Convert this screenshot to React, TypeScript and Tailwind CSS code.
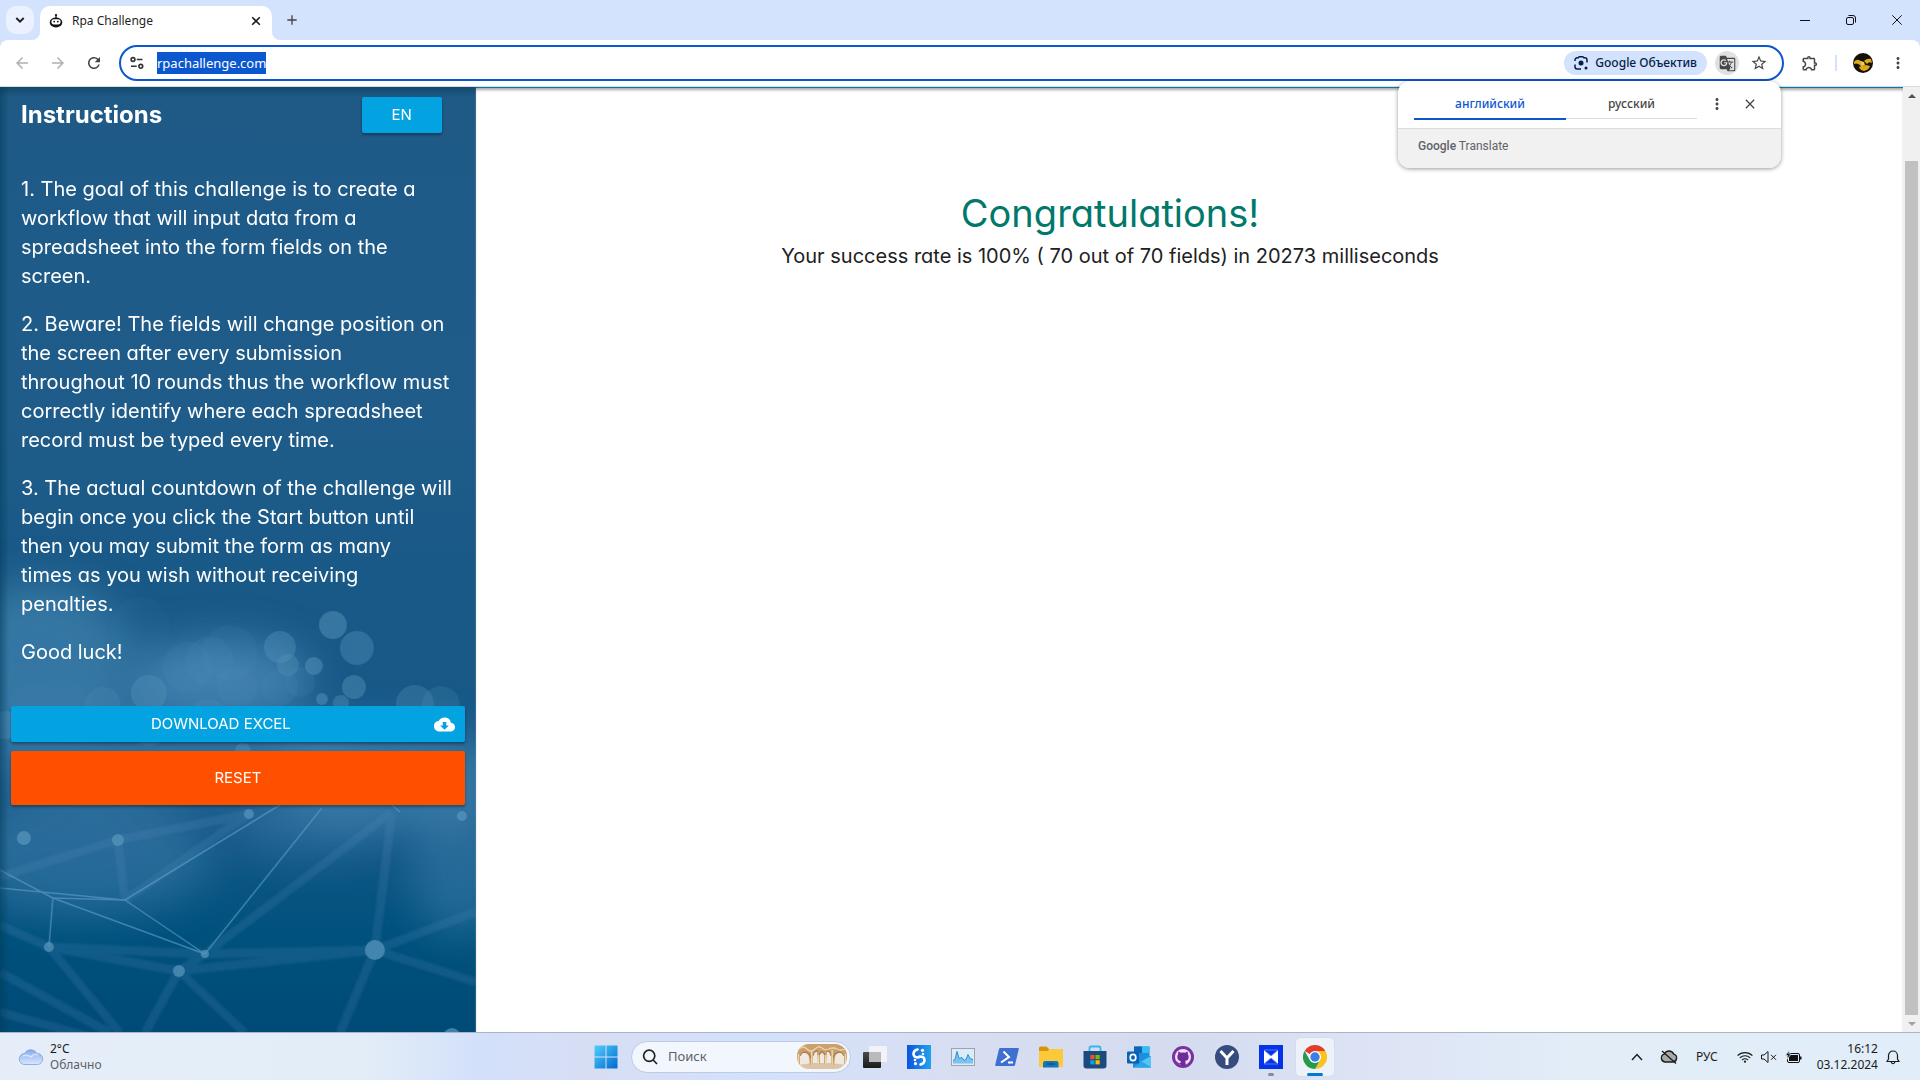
import React from "react";
import {
  MdAdd,
  MdArrowBack,
  MdArrowForward,
  MdClose,
  MdCloudDownload,
  MdGTranslate,
  MdMoreVert,
  MdOutlineExtension,
  MdRefresh,
  MdStarBorder,
} from "react-icons/md";

const uiFont = 'font-["Noto_Sans","Open_Sans",sans-serif]';
const pageFont = 'font-["Inter",sans-serif] [font-feature-settings:"cv11"]';

function RobotIcon() {
  return (
    <svg viewBox="0 0 14 14" className="size-[14px]" aria-hidden="true">
      <circle cx="7" cy="1.2" r="1.1" fill="#111" />
      <path d="M7 2v2" stroke="#111" strokeWidth="1.2" />
      <path d="M.7 8.5A6.3 5 0 0 1 13.3 8.5 6.3 5 0 0 1 .7 8.500z" fill="#111" />
      <rect x="2.400" y="5.200" width="9.200" height="5.200" rx="2.600" fill="#fff" />
      <circle cx="5.200" cy="7.600" r=".9" fill="#111" />
      <circle cx="8.800" cy="7.600" r=".9" fill="#111" />
    </svg>
  );
}

function TabStrip() {
  return (
    <header className="flex h-10 items-end bg-[#d3e2fd]">
      <button aria-label="Search tabs" className="mb-[6px] ml-[6px] grid size-7 place-items-center rounded-[10px] bg-[#ebf1fe]">
        <svg viewBox="0 0 10 10" className="size-[10px]" fill="none" stroke="#1f1f1f" strokeWidth="1.900"><path d="M1.300 3l3.700 3.700L8.700 3" /></svg>
      </button>
      <svg viewBox="0 0 8 8" className="-ml-0.5 size-2" aria-hidden="true">
        <path d="M8 0v8H0a8 8 0 0 0 8-8z" fill="#fff" />
      </svg>
      <div className="flex h-[34px] w-[232px] items-center rounded-t-[10px] bg-white pr-[11px] pl-[9px] pb-1">
        <RobotIcon />
        <span className="ml-[9px] flex-1 text-[12px] text-[#1f1f1f]">Rpa Challenge</span>
        <button aria-label="Close tab">
          <svg viewBox="0 0 10 10" className="size-[10px]" fill="none" stroke="#1f1f1f" strokeWidth="1.600"><path d="M1.200 1.200l7.600 7.600M8.800 1.200L1.200 8.800" /></svg>
        </button>
      </div>
      <svg viewBox="0 0 8 8" className="size-2" aria-hidden="true">
        <path d="M0 0v8h8a8 8 0 0 1-8-8z" fill="#fff" />
      </svg>
      <button aria-label="New tab" className="mb-[12px] ml-1 text-[#444]">
        <MdAdd className="size-4" />
      </button>
      <div className="ml-auto flex h-10 items-center gap-9 pr-[18px]">
        <button aria-label="Minimize">
          <svg viewBox="0 0 10 10" className="size-[10px]" stroke="#111" fill="none"><path d="M0 5.500h10" /></svg>
        </button>
        <button aria-label="Restore">
          <svg viewBox="0 0 10 10" className="size-[10px]" stroke="#111" fill="none">
            <rect x=".5" y="2.500" width="7" height="7" rx="1.500" />
            <path d="M2.500 .5H7a2.500 2.500 0 0 1 2.500 2.500v4.500" />
          </svg>
        </button>
        <button aria-label="Close">
          <svg viewBox="0 0 10 10" className="size-[10px]" stroke="#111" fill="none"><path d="M.3.3l9.400 9.400M9.700.3L.3 9.700" /></svg>
        </button>
      </div>
    </header>
  );
}

function Toolbar() {
  return (
    <nav className="bg-[#d3e2fd]">
      <div className="flex h-[47px] items-center rounded-t-lg border-b border-[#dcdcdc] bg-white pr-[13px] pl-[13px]">
        <div className="flex gap-[18px]">
          <button aria-label="Back" className="text-[#b0b0b0]"><MdArrowBack className="size-[18px]" /></button>
          <button aria-label="Forward" className="text-[#b0b0b0]"><MdArrowForward className="size-[18px]" /></button>
          <button aria-label="Reload" className="text-[#444]"><MdRefresh className="size-[18px]" /></button>
        </div>
        <div className="ml-4 flex h-9 flex-1 items-center rounded-full border-2 border-[#0b57d0] bg-white pr-[14px] pl-[9px]">
          <button aria-label="Site information">
            <svg viewBox="0 0 14 14" className="size-[14px]" fill="none" stroke="#333" strokeWidth="1.600">
              <circle cx="3" cy="3.500" r="1.900" />
              <path d="M6.800 3.500H12.500M1 10.300h5.700" />
              <circle cx="10.800" cy="10.300" r="1.900" />
            </svg>
          </button>
          <input
            aria-label="Address"
            defaultValue="rpachallenge.com"
            className="ml-[13px] h-[22px] [field-sizing:content] bg-[#0b57d0] text-[13px] text-white outline-none"
          />
          <button className="ml-auto flex h-6 items-center gap-[7px] rounded-full bg-[#d3e2fd] px-[10px] text-[12px] font-medium text-[#041e49]">
            <svg viewBox="0 0 14 14" className="size-[14px]" fill="none" stroke="#041e49" strokeWidth="1.500">
              <path d="M1 5V4a2.200 2.200 0 0 1 2.200-2.200h1L5.200.8h3.600l1 1h1A2.200 2.200 0 0 1 13 4v2.500M1 8.500v2.300A2.200 2.200 0 0 0 3.200 13H7" />
              <circle cx="7" cy="7" r="2.500" fill="#041e49" stroke="none" />
              <circle cx="12" cy="12" r="1.500" fill="#041e49" stroke="none" />
            </svg>
            Google Объектив
          </button>
          <button aria-label="Translate this page" className="ml-2 grid size-6 place-items-center rounded-full bg-[#e1e1e1] text-[#474747]">
            <MdGTranslate className="size-[17px]" />
          </button>
          <button aria-label="Bookmark" className="ml-[11px] text-[#474747]"><MdStarBorder className="size-[18px]" /></button>
        </div>
        <button aria-label="Extensions" className="ml-[17px] text-[#474747]"><MdOutlineExtension className="size-[18px]" /></button>
        <span className="ml-4 h-4 w-0.5 bg-[#d3e2fd]" />
        <button aria-label="Profile" className="ml-4">
          <svg viewBox="0 0 20 20" className="size-5">
            <circle cx="10" cy="10" r="10" fill="#14110c" />
            <path d="M1 9q2-3 5-2l5 3-2 4Q5 9 1 11zM11 8q3-3 7-2l1 4q-3-2-5 1zM8 13l5-1 4 1q-1 4-6 5-4-1-5-4z" fill="#dfa81a" />
            <path d="M7 8l4 1 1 3-3 1z" fill="#f4cf45" />
          </svg>
        </button>
        <button aria-label="Menu" className="ml-4 text-[#474747]"><MdMoreVert className="size-[18px]" /></button>
      </div>
    </nav>
  );
}

function TranslateBubble() {
  return (
    <div className="absolute top-[81px] right-[139px] z-10 w-[383px] overflow-hidden rounded-xl bg-white shadow-[0_1px_4px_rgba(0,0,0,0.4)]">
      <div className="flex h-12 items-start border-b border-[#dadce0] pl-4 text-[12px] font-medium">
        <div role="tablist" className="flex pt-1">
          <button role="tab" aria-selected="true" className="h-[35px] w-[152px] border-b-2 border-[#0b57d0] pt-1 text-[#0b57d0]">английский</button>
          <button role="tab" aria-selected="false" className="h-[34px] w-[131px] border-b border-[#dadce0] pt-1 text-[#474747]">русский</button>
        </div>
        <button aria-label="Options" className="mt-[14px] ml-[11px] text-[#474747]"><MdMoreVert className="size-[18px]" /></button>
        <button aria-label="Close" className="mt-[15px] ml-4 text-[#474747]"><MdClose className="size-4" /></button>
      </div>
      <div className="h-[39px] bg-[#f1f1f1] pt-2 pl-5 font-[Roboto,sans-serif] text-[12px] text-[#5f6368]">
        <span className="font-medium">Google</span> Translate
      </div>
    </div>
  );
}

const fine: number[][] = [
  [0, 783, 53, 811], [0, 801, 125, 813], [53, 811, 125, 813], [53, 811, 49, 860],
  [53, 811, 205, 867], [125, 813, 205, 867], [125, 813, 280, 718], [205, 867, 322, 721], [333, 665, 400, 725],
];
const thick: number[][] = [
  [49, 860, 205, 867], [49, 860, 179, 884], [205, 867, 375, 863], [179, 884, 375, 863],
  [179, 884, 145, 946], [179, 884, 245, 946], [375, 863, 340, 946], [375, 863, 392, 725],
  [205, 867, 392, 725], [179, 884, 205, 867], [118, 753, 125, 813], [49, 860, 120, 946],
  [0, 885, 110, 946], [0, 838, 49, 860], [249, 727, 125, 813], [375, 863, 476, 895],
  [375, 863, 476, 825], [0, 790, 118, 753], [118, 753, 249, 727], [0, 925, 90, 950],
];
const dots: number[][] = [
  [24, 751, 7], [118, 753, 6], [249, 727, 5], [49, 860, 5], [205, 867, 4], [179, 884, 6],
  [375, 863, 10], [462, 729, 5], [452, 950, 9],
];
const bokeh: number[][] = [
  [333, 538, 14, 0.5], [357, 561, 17, 0.4], [280, 560, 16, 0.4], [288, 578, 11, 0.35],
  [314, 579, 9, 0.5], [354, 600, 12, 0.45], [322, 612, 6, 0.5], [341, 616, 8, 0.4],
  [149, 606, 18, 0.35], [103, 618, 18, 0.2], [415, 617, 19, 0.3], [441, 618, 19, 0.2],
  [6, 638, 14, 0.4], [188, 580, 25, 0.12], [210, 574, 24, 0.12], [230, 566, 28, 0.08],
  [237, 600, 20, 0.12], [208, 632, 20, 0.2], [140, 540, 30, 0.05], [300, 595, 15, 0.12],
  [243, 664, 8, 0.4], [149, 640, 19, 0.25], [280, 600, 18, 0.12],
];

function NetworkBackdrop() {
  return (
    <svg viewBox="0 0 476 945" preserveAspectRatio="xMidYMid slice" className="absolute inset-0 size-full" aria-hidden="true">
      <defs>
        <linearGradient id="deep" x1="0" y1="0" x2="0" y2="1">
          <stop offset="0" stopColor="#1f5a87" />
          <stop offset=".35" stopColor="#1f5c89" />
          <stop offset=".52" stopColor="#195987" />
          <stop offset=".78" stopColor="#165888" />
          <stop offset=".9" stopColor="#00517d" />
          <stop offset="1" stopColor="#004a76" />
        </linearGradient>
        <linearGradient id="edge">
          <stop offset="0" stopColor="#003a55" stopOpacity=".5" />
          <stop offset="1" stopColor="#003a55" stopOpacity="0" />
        </linearGradient>
        <linearGradient id="lip" x1="0" y1="0" x2="0" y2="1">
          <stop offset="0" stopColor="#053a52" stopOpacity=".5" />
          <stop offset="1" stopColor="#053a52" stopOpacity="0" />
        </linearGradient>
        <filter id="haze" x="-50%" y="-50%" width="200%" height="200%"><feGaussianBlur stdDeviation="20" /></filter>
        <filter id="soft" x="-20%" y="-20%" width="140%" height="140%"><feGaussianBlur stdDeviation="1" /></filter>
      </defs>
      <rect width="476" height="945" fill="url(#deep)" />
      <g filter="url(#haze)" fill="#4a8ab6">
        <ellipse cx="40" cy="570" rx="90" ry="75" opacity=".6" />
        <ellipse cx="220" cy="588" rx="90" ry="35" opacity=".8" />
        <ellipse cx="140" cy="660" rx="220" ry="50" opacity=".45" />
        <ellipse cx="390" cy="690" rx="120" ry="50" opacity=".6" />
        <ellipse cx="80" cy="770" rx="130" ry="60" opacity=".4" />
        <ellipse cx="310" cy="740" rx="80" ry="30" opacity=".35" />
        <ellipse cx="460" cy="780" rx="50" ry="70" opacity=".4" />
      </g>
      <g filter="url(#soft)">
        <g stroke="#5b8fbf" strokeWidth="9" opacity=".18">
          {thick.map(([a, b, c, d], i) => <line key={i} x1={a} y1={b} x2={c} y2={d} />)}
        </g>
      </g>
      <g stroke="#5e9cc7" strokeWidth="1.500" opacity=".65">
        {fine.map(([a, b, c, d], i) => <line key={i} x1={a} y1={b} x2={c} y2={d} />)}
      </g>
      <g fill="#5594bb">
        {dots.map(([x, y, r], i) => <circle key={i} cx={x} cy={y} r={r} opacity=".75" />)}
        {bokeh.map(([x, y, r, o], i) => <circle key={i} cx={x} cy={y} r={r} opacity={o} />)}
      </g>
      <rect width="9" height="945" fill="url(#edge)" />
      <rect width="476" height="10" fill="url(#lip)" />
    </svg>
  );
}

function Instructions() {
  return (
    <aside className="relative w-1/4 shrink-0 overflow-hidden text-white">
      <NetworkBackdrop />
      <div className="relative">
        <div className="flex items-center justify-between pt-[10px] pr-[34px] pl-[21px]">
          <h1 className="text-[24px] leading-9 font-bold">Instructions</h1>
          <button className="h-9 w-20 rounded-xs bg-[#03a3e1] text-[15px] shadow-[0_2px_3px_rgba(0,0,0,0.35)]">EN</button>
        </div>
        <div className="mt-[42px] flex flex-col gap-[19px] pl-[21px] text-[20px] leading-[29px] whitespace-nowrap">
          <p>
            1. The goal of this challenge is to create a<br />workflow that will input data from a<br />
            spreadsheet into the form fields on the<br />screen.
          </p>
          <p>
            2. Beware! The fields will change position on<br />the screen after every submission<br />
            throughout 10 rounds thus the workflow must<br />correctly identify where each spreadsheet<br />
            record must be typed every time.
          </p>
          <p>
            3. The actual countdown of the challenge will<br />begin once you click the Start button until<br />
            then you may submit the form as many<br />times as you wish without receiving<br />penalties.
          </p>
          <p>Good luck!</p>
        </div>
        <div className="mt-[39px] flex flex-col gap-[9px] px-[11px]">
          <a href="#download" className="flex h-9 items-center rounded-xs bg-[#03a3e1] pr-[10px] text-[15px] shadow-[0_2px_3px_rgba(0,0,0,0.35)]">
            <span className="flex-1 pr-[3px] text-center">DOWNLOAD EXCEL</span>
            <MdCloudDownload className="size-[21px]" />
          </a>
          <button className="h-[54px] rounded-xs bg-[#ff5000] text-[15px] shadow-[0_2px_3px_rgba(0,0,0,0.35)]">RESET</button>
        </div>
      </div>
    </aside>
  );
}

function Scrollbar() {
  return (
    <div className="flex w-[17px] shrink-0 flex-col items-center bg-[#f0f0f0]">
      <span className="grid h-[74px] pt-[7px]"><svg viewBox="0 0 8 4" className="h-1 w-2"><path d="M0 4l4-4 4 4z" fill="#505050" /></svg></span>
      <span className="w-[13px] flex-1 bg-[#c1c1c1]" />
      <span className="grid h-[17px] place-items-center"><svg viewBox="0 0 8 4" className="h-1 w-2"><path d="M0 0l4 4 4-4z" fill="#a0a0a0" /></svg></span>
    </div>
  );
}

function Tile({ children, active = false, running = false, label }: { children: React.ReactNode; active?: boolean; running?: boolean; label: string }) {
  return (
    <button aria-label={label} className="relative grid h-12 w-11 place-items-center">
      {active && <span className="absolute inset-x-[3px] top-[5px] bottom-[5px] rounded bg-[#edf1fa] shadow-[0_0_1px_rgba(0,0,0,0.2)]" />}
      <span className="relative">{children}</span>
      {active && <span className="absolute bottom-[5px] h-[3px] w-4 rounded-full bg-[#0078d4]" />}
      {running && <span className="absolute bottom-[5px] h-[3px] w-[6px] rounded-full bg-[#868b96]" />}
    </button>
  );
}

function Taskbar() {
  const s = "size-6";
  return (
    <footer className="flex h-12 shrink-0 items-center border-t border-[#aab6c8] bg-[linear-gradient(90deg,#e5eef8_0%,#e3edf8_19%,#d3e0fa_25%,#d7def4_31%,#d3e1fb_39%,#d8def2_50%,#d6dcf0_62%,#dde4f5_72%,#e2edf8_82%,#e1edf8_100%)]">
      <div className="flex flex-1 items-center gap-[6px] pl-[18px]">
        <svg viewBox="0 0 26 18" className="h-[18px] w-[26px]" aria-hidden="true">
          <defs><linearGradient id="cl" x1="0" y1="0" x2="0" y2="1"><stop offset="0" stopColor="#86a9ee" /><stop offset="1" stopColor="#dbe8fb" /></linearGradient></defs>
          <path d="M7 16.500a5.500 5.500 0 0 1-.5-11A7 7 0 0 1 19 5.500a5.500 5.500 0 0 1 .5 11z" fill="url(#cl)" stroke="#7d9fe6" strokeWidth=".8" />
          <path d="M5 8q4-2 8 1M13 9q3-4 7-2" fill="none" stroke="#eaf2fe" strokeWidth="1.500" opacity=".7" />
        </svg>
        <div className="text-[12px] leading-4"><p className="text-[#1b1b1b]">2°C</p><p className="text-[#5d6168]">Облачно</p></div>
      </div>
      <div className="flex items-center pl-[3px]">
        <Tile label="Start">
          <svg viewBox="0 0 24 24" className={s}>
            <defs><linearGradient id="win" x1="0" y1="0" x2="1" y2="1"><stop offset="0" stopColor="#4fd0fb" /><stop offset="1" stopColor="#0068cf" /></linearGradient></defs>
            <path d="M.5 .5h11v11H.5zM12.500 .5h11v11h-11zM.5 12.500h11v11H.5zM12.500 12.500h11v11h-11z" fill="url(#win)" />
          </svg>
        </Tile>
        <label className="mr-[2px] ml-[3px] flex h-8 w-[220px] items-center rounded-full border border-[#bccae4] bg-[#f2f6fd] pr-[3px] pl-[10px]">
          <svg viewBox="0 0 16 16" className="size-4 shrink-0" fill="none" stroke="#222" strokeWidth="1.700"><circle cx="7.200" cy="6.800" r="5.600" /><path d="M11.200 11l3.800 4" /></svg>
          <input aria-label="Поиск" placeholder="Поиск" className="ml-[10px] w-full min-w-0 bg-transparent text-[13px] placeholder:text-[#5c6068] focus:outline-none" />
          <svg viewBox="0 0 50 26" className="h-[26px] w-[50px] shrink-0" aria-hidden="true">
            <defs><clipPath id="pill"><rect width="50" height="25" rx="12" /></clipPath></defs>
            <g clipPath="url(#pill)">
              <rect width="50" height="26" fill="#efe9e2" />
              <path d="M0 26v-5l16-2h18l16 2v5z" fill="#dcc4a6" />
              <path d="M0 0h50v22h-3V12q-2-4-5-3-4 1-4 5l-1 7h-3V12q-2-5-4-4l-1 12h-2v-9q-2-4-4 0v9h-2l-1-12q-3 0-4 4v9h-3l-1-7q0-4-4-5-3-1-5 3v10H0z" fill="#c9a06e" />
              <g fill="none" stroke="#9a6f40" strokeWidth=".9">
                <path d="M3 12q2-5 6-4 4 1 5 6M16 12q1-6 5-5M22 11q3-7 6 0M29 7q4-1 5 5M36 14q1-5 5-6 4-1 6 4" />
              </g>
              <g stroke="#efd7ad" strokeWidth="1.400"><path d="M1.500 22V10M14.800 21V6M35.200 21V6M48.500 22V10M21.500 20v-9M28.500 20v-9" /></g>
              <path d="M2 5q4-4 8 0t8 0 7-1 7 1 8 0 8 0" stroke="#edd3a8" strokeWidth="1.300" fill="none" />
            </g>
          </svg>
        </label>
        <Tile label="Task View">
          <svg viewBox="0 0 24 24" className={s}>
            <defs><linearGradient id="tv" x1="0" y1="0" x2="0" y2="1"><stop offset="0" stopColor="#4a4a4a" /><stop offset="1" stopColor="#1a1a1a" /></linearGradient></defs>
            <rect x="0" y="7" width="18" height="16" rx="1" fill="url(#tv)" />
            <rect x="6" y="1" width="18" height="16" rx="1" fill="#f2f3f6" />
            <rect x="6" y="7" width="12" height="10" fill="#b9babd" />
          </svg>
        </Tile>
        <Tile label="Studio">
          <svg viewBox="0 0 24 24" className={s}>
            <defs><linearGradient id="st"><stop offset="0" stopColor="#0a55dc" /><stop offset="1" stopColor="#23a2ee" /></linearGradient></defs>
            <path d="M0 0h24v24H0z" fill="url(#st)" />
            <path d="M10.500 4.500q-4 1-4 4.500 0 3.500 5 3.500M13.500 19.500q4-1 4-4.500 0-3.500-5-3.500" fill="none" stroke="#fff" strokeWidth="2.600" strokeLinecap="round" />
            <circle cx="15.500" cy="5.300" r="1.600" fill="#fff" /><circle cx="16" cy="9" r="1.300" fill="#fff" /><circle cx="8.500" cy="18.700" r="1.600" fill="#fff" /><circle cx="8" cy="15" r="1.300" fill="#fff" />
          </svg>
        </Tile>
        <Tile label="Performance Monitor">
          <svg viewBox="0 0 24 24" className={s}>
            <rect x=".5" y="3.500" width="23" height="17" fill="#dcebf5" stroke="#9aa5b0" />
            <path d="M2 18.500v-3l2-1 2-8 2 7 3-1 2 3 2-1 2-5 2 4 3 1v4z" fill="#7cc3f2" />
            <path d="M2 15.500l2-1 2-8 2 7 3-1 2 3 2-1 2-5 2 4 3 1" fill="none" stroke="#2f8fd8" />
          </svg>
        </Tile>
        <Tile label="PowerShell">
          <svg viewBox="0 0 24 24" className={s}>
            <path d="M5.500 3h17.700q.8 0 .6 1L20 20q-.2 1-1.200 1H1Q0 21 .2 20L4 4q.3-1 1.500-1z" fill="#3f6fd0" />
            <path d="M8.500 6.500l5.500 5.500-8 5.500M13 17.500h5" fill="none" stroke="#fff" strokeWidth="2" />
          </svg>
        </Tile>
        <Tile label="File Explorer">
          <svg viewBox="0 0 24 24" className={s}>
            <path d="M0 3q0-1.500 1.500-1.500h6L10 4v3H0z" fill="#d9930d" />
            <path d="M0 6h8.500l2-2H23q1 0 1 1v17H0z" fill="#fcc93b" />
            <path d="M4 22.500V18q0-2 2-2h11.500q2 0 2 2v4.500z" fill="#1474bd" /><path d="M7.500 19h8.500" stroke="#0b4f8a" strokeWidth="1.200" />
          </svg>
        </Tile>
        <Tile label="Microsoft Store">
          <svg viewBox="0 0 24 24" className={s}>
            <path d="M6.500 6V3q0-1.500 1.500-1.500h8q1.500 0 1.500 1.500v3" fill="none" stroke="#36b6ee" strokeWidth="1.800" />
            <path d="M.5 6h23v14.500q0 3-3 3h-17q-3 0-3-3z" fill="#1c4a80" />
            <path d="M7.300 10h4.200v4.200H7.300z" fill="#f25022" /><path d="M12.500 10h4.200v4.200h-4.200z" fill="#7fba00" />
            <path d="M7.300 15.200h4.200v4.200H7.300z" fill="#00a4ef" /><path d="M12.500 15.200h4.200v4.200h-4.200z" fill="#ffb900" />
          </svg>
        </Tile>
        <Tile label="Outlook">
          <svg viewBox="0 0 24 24" className={s}>
            <path d="M7 1.500h15.500v13H7z" fill="#1b8fdc" /><path d="M15 1.500h7.500V8H15z" fill="#33bdf2" /><path d="M7 1.500h8V8H7z" fill="#0f66b8" />
            <path d="M6 11l18 0v11.500H6z" fill="#1c8fdf" /><path d="M24 11v11.500L13 17z" fill="#54c4f3" /><path d="M6 22.500l9-6 9 6z" fill="#2aa7e8" />
            <rect x="0" y="6.500" width="12" height="12" rx="1" fill="#0a62b5" />
            <ellipse cx="6" cy="12.500" rx="2.800" ry="3.200" fill="none" stroke="#fff" strokeWidth="1.700" />
          </svg>
        </Tile>
        <Tile label="GitHub">
          <svg viewBox="0 0 22 22" className="size-[22px]">
            <circle cx="11" cy="11" r="11" fill="#7c2fa0" /><circle cx="11" cy="11" r="8" fill="#efe2f5" />
            <path d="M6.500 5.500l2.500 1.300q2-.5 4 0l2.500-1.300q.6 1.500.2 2.600 1 1.200 1 2.900 0 3.400-3.700 4 .6.700.6 1.700v3.300H8.400v-2q-2.400.3-3.100-1.500-.4-.8-1-1.100.9-.2 1.600.8.9 1.300 2.500.8 0-1.300.6-1.800-3.700-.6-3.700-4.200 0-1.700 1-2.900-.4-1.100.2-2.600z" fill="#6f2b9a" />
          </svg>
        </Tile>
        <Tile label="Yandex">
          <svg viewBox="0 0 24 24" className={s}><circle cx="12" cy="12" r="12" fill="#364c7f" /><path d="M5.500 6l6.500 7 6.500-7M12 12.500V20" fill="none" stroke="#fff" strokeWidth="3" /></svg>
        </Tile>
        <Tile label="Robot" running>
          <svg viewBox="0 0 24 24" className={s}><path d="M0 0h24v24H0z" fill="#0433e8" /><path d="M5 5l7 4.500L19 5v14l-7-4.500L5 19z" fill="#fff" /><path d="M5 5h14l-7 6zM5 19h14l-7-6z" fill="#0433e8" stroke="#6f8cf5" strokeWidth=".8" /></svg>
        </Tile>
        <Tile label="Chrome" active>
          <svg viewBox="0 0 24 24" className={s}>
            <path d="M12 12L1.600 6A12 12 0 0 1 22.400 6z" fill="#e33b2e" /><path d="M12 6h10.400A12 12 0 0 1 12 24l5.200-9z" fill="#fcc31e" />
            <path d="M12 24A12 12 0 0 1 1.600 6l5.200 9L12 18l5.200-3z" fill="#269a48" />
            <circle cx="12" cy="12" r="6" fill="#fff" /><circle cx="12" cy="12" r="4.700" fill="#3b7de9" />
          </svg>
        </Tile>
      </div>
      <div className="flex flex-1 items-center justify-end pr-5 text-[12px] leading-4 text-[#1b1b1b]">
        <svg viewBox="0 0 12 8" className="h-2 w-3" fill="none" stroke="#1b1b1b" strokeWidth="1.400"><path d="M1 7l5-5.500L11 7" /></svg>
        <svg viewBox="0 0 18 14" className="ml-[17px] h-[14px] w-[18px]" stroke="#1b1b1b" strokeWidth="1.300">
          <path d="M5 12a4 4 0 0 1-.8-7.800 5.200 5.200 0 0 1 9.600 0A4 4 0 0 1 13 12z" fill="#a9a9a9" /><path d="M2 1l14 12.500" />
        </svg>
        <span className="ml-[18px]">РУС</span>
        <svg viewBox="0 0 16 12" className="ml-[19px] h-3 w-4" fill="none" stroke="#1b1b1b" strokeWidth="1.200">
          <path d="M.6 4.600a10.500 10.500 0 0 1 14.800 0M2.800 6.900a7.400 7.400 0 0 1 10.400 0M5 9.100a4.300 4.300 0 0 1 6 0" /><circle cx="8" cy="10.700" r="1.100" fill="#1b1b1b" stroke="none" />
        </svg>
        <svg viewBox="0 0 16 12" className="ml-2 h-3 w-4" fill="none" stroke="#1b1b1b"><path d="M.5 4v4H3l4 3.500V.5L3 4zM10 3.800l5 5M15 3.800l-5 5" /></svg>
        <svg viewBox="0 0 17 14" className="ml-2 h-[14px] w-[17px]">
          <rect x="2.500" y="3.500" width="12" height="9" rx="1.500" fill="none" stroke="#111" />
          <rect x="4" y="5" width="9" height="6" fill="#111" />
          <path d="M15 6.500h1.500v3H15z" fill="#111" />
          <path d="M4.500 0L.5 5.500h2.400L2 9.500 6 4H3.800z" fill="#111" stroke="#e2edf8" strokeWidth=".7" />
        </svg>
        <div className="ml-[15px] text-right"><p>16:12</p><p>03.12.2024</p></div>
        <svg viewBox="0 0 14 16" className="ml-2 h-4 w-[14px]" fill="none" stroke="#1b1b1b" strokeWidth="1.200"><path d="M1 12.500l1.500-2.500V6.500a4.500 4.500 0 0 1 9 0V10l1.500 2.500zM5 13q2 3.500 4 0" /></svg>
      </div>
    </footer>
  );
}

export default function App() {
  return (
    <div className={`relative flex min-h-screen flex-col bg-white ${uiFont}`}>
      <TabStrip />
      <Toolbar />
      <TranslateBubble />
      <div className="flex flex-1">
        <div className={`flex flex-1 ${pageFont}`}>
          <Instructions />
          <main className="flex-1 border-t border-[#0277b0] shadow-[inset_0_3px_3px_-1px_rgba(0,0,0,0.35)]">
            <div className="w-8/9 pt-[101px] text-center">
              <h2 className="text-[38px] leading-[48px] text-[#00796b]">Congratulations!</h2>
              <p className="mt-[3px] text-[20px] leading-8 text-[#212121]">Your success rate is 100% ( 70 out of 70 fields) in 20273 milliseconds</p>
            </div>
          </main>
        </div>
        <Scrollbar />
      </div>
      <Taskbar />
    </div>
  );
}
